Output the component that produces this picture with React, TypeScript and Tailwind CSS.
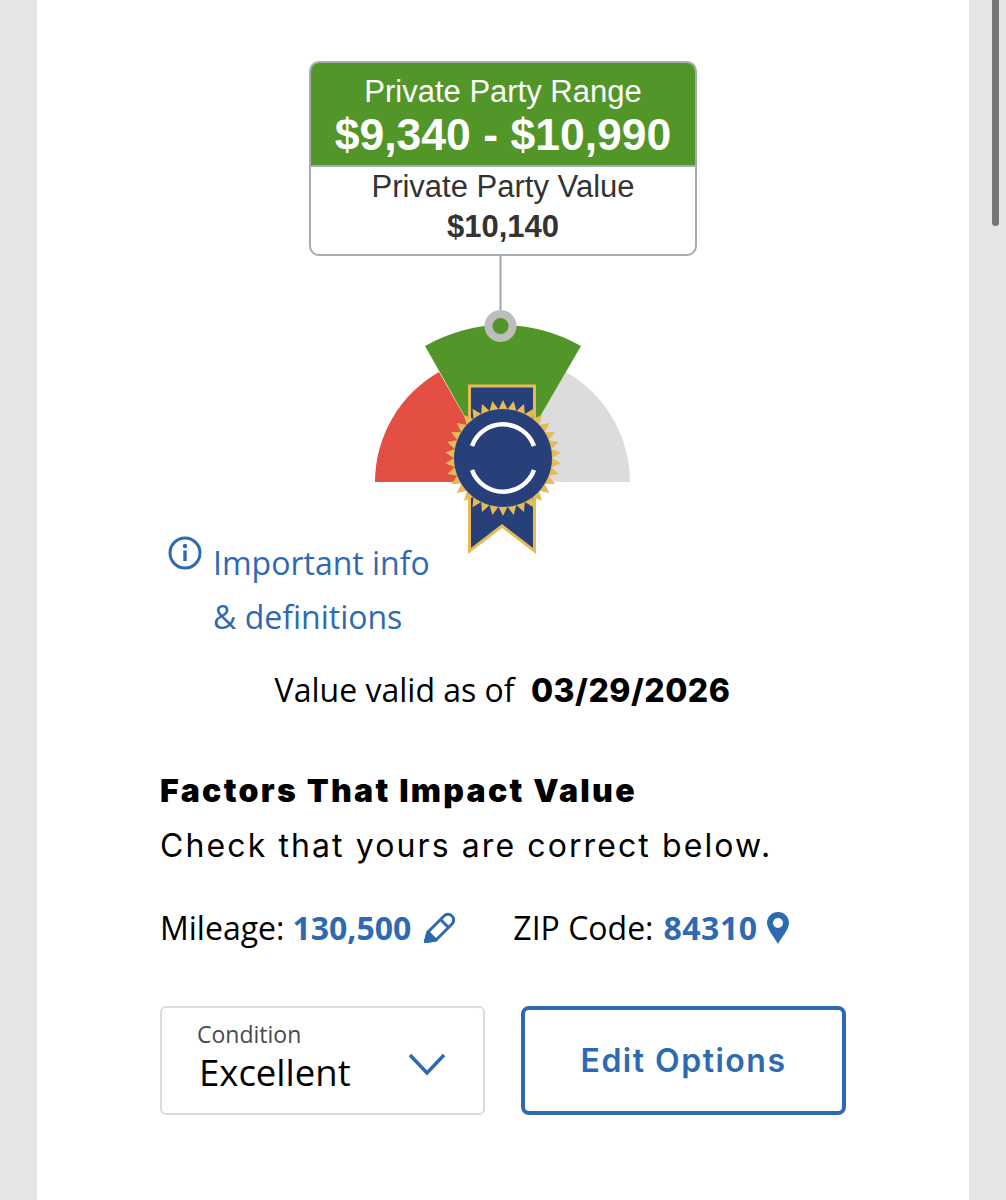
const openSans = "font-['Open_Sans',sans-serif]";
const arial = "font-['Liberation_Sans',Arial,sans-serif]";
const heading = "font-['Inter',sans-serif]";

// sawtooth ring behind the seal
function starPoints(cx: number, cy: number, outer: number, inner: number, teeth: number) {
  const pts: string[] = [];
  for (let i = 0; i < teeth * 2; i++) {
    const r = i % 2 === 0 ? outer : inner;
    const a = (Math.PI * i) / teeth - Math.PI / 2;
    pts.push(`${(cx + r * Math.cos(a)).toFixed(1)},${(cy + r * Math.sin(a)).toFixed(1)}`);
  }
  return pts.join(" ");
}

function Gauge() {
  return (
    <svg className="block w-[290px] h-[298px]" viewBox="358 256 290 298">
      <line x1="500.5" y1="256" x2="500.5" y2="312" stroke="#9ca6ae" strokeWidth="2" />
      <path d="M375 482 A127 127 0 0 1 439 372 L502 482 Z" fill="#e34f42" />
      <path d="M630 482 A127 127 0 0 0 566 372 L502 482 Z" fill="#dcdcdc" />
      <path d="M425 346 A156 156 0 0 1 581 346 L502 482 Z" fill="#52962a" />
      <circle cx="500.5" cy="326" r="12" fill="#52962a" stroke="#bdbdbd" strokeWidth="8" />
      <path d="M469.5 386 H534.5 V551 L502 526 L469.5 551 Z" fill="#28407a" stroke="#e6bb55" strokeWidth="3" />
      <polygon points={starPoints(503, 458, 58, 49, 34)} fill="#e6bb55" />
      <circle cx="503" cy="458" r="49" fill="#28407a" />
      <path d="M472 446 A33 33 0 0 1 534 446" fill="none" stroke="#fff" strokeWidth="4.5" />
      <path d="M472 470 A33 33 0 0 0 534 470" fill="none" stroke="#fff" strokeWidth="4.5" />
    </svg>
  );
}

function ValueCard() {
  return (
    <div className={`w-[388px] h-[195px] rounded-[10px] border-2 border-[#a3adb5] bg-white overflow-hidden text-center ${arial}`}>
      <div className="h-[104px] bg-[#52962a] text-white border-b-2 border-[#a3adb5] pt-[11px]">
        <div className="text-[31px] leading-[36px]">Private Party Range</div>
        <div className="text-[44.5px] leading-[50px] font-bold">$9,340 - $10,990</div>
      </div>
      <div className="text-[#333]">
        <div className="text-[31px] leading-[40px]">Private Party Value</div>
        <div className="text-[31px] leading-[40px] font-bold">$10,140</div>
      </div>
    </div>
  );
}

function InfoIcon() {
  return (
    <svg className="h-[34px] w-[34px] shrink-0" viewBox="0 0 34 34" fill="none">
      <circle cx="17" cy="17" r="15" stroke="#2e6ab1" strokeWidth="3" />
      <circle cx="17" cy="10" r="2.2" fill="#2e6ab1" />
      <path d="M17 14.5 V25" stroke="#2e6ab1" strokeWidth="3.4" />
    </svg>
  );
}

function PencilIcon() {
  return (
    <svg className="ml-[11px] h-[33px] w-[33px]" viewBox="7 8 33 33" fill="none" stroke="#2e6ab1" strokeWidth="3" strokeLinejoin="round">
      <path d="M10.5 37.5 L13 28 L29 12 A5.6 5.6 0 0 1 37 20 L21 36 Z" />
      <path d="M25.5 15.5 L33.5 23.5" />
      <path d="M10.5 37.5 L13 28 L21 36 Z" fill="#2e6ab1" />
    </svg>
  );
}

function PinIcon() {
  return (
    <svg className="ml-[9px] h-[32px] w-[22px]" viewBox="0 0 22 32">
      <path
        fillRule="evenodd"
        fill="#2e6ab1"
        d="M11 0 C4.9 0 0 4.9 0 11 C0 17 7 25 11 32 C15 25 22 17 22 11 C22 4.9 17.1 0 11 0 Z M11 6 A5 5 0 1 1 11 16 A5 5 0 1 1 11 6 Z"
      />
    </svg>
  );
}

export default function App() {
  return (
    <div className={`relative h-[1200px] overflow-hidden bg-[#e5e5e5] px-[37px] ${openSans}`}>
      <div className="h-full w-[932px] bg-white pt-[61px]">
        <div className="flex flex-col items-center">
          <ValueCard />
          <Gauge />
        </div>

        <div className="-mt-[18px] ml-[131px] flex text-[#2e6ab1] text-[32px] leading-[54px]">
          <InfoIcon />
          <a className="ml-[11px] block">
            Important info
            <br />
            &amp; definitions
          </a>
        </div>

        <div className="mt-[24px] -ml-[1px] text-center text-[32px] leading-[44px] text-black">
          Value valid as of <span className={`ml-[8px] font-extrabold tracking-[0.5px] ${heading}`}>03/29/2026</span>
        </div>

        <div className="mt-[56px] ml-[123px] w-[700px]">
          <div className={`text-[32px] leading-[44px] font-black tracking-[2.3px] text-black ${heading}`}>
            Factors That Impact Value
          </div>
          <div className={`mt-[11px] text-[32px] leading-[44px] tracking-[2.1px] text-black ${heading}`}>
            Check that yours are correct below.
          </div>

          <div className="mt-[38px] flex items-center text-[32px] leading-[44px] text-black">
            <span>Mileage:</span>
            <span className="ml-[8px] font-bold text-[#2e6ab1]">130,500</span>
            <PencilIcon />
            <span className="ml-[58px]">ZIP Code:</span>
            <span className="ml-[10px] font-bold tracking-[0.5px] text-[#2e6ab1]">84310</span>
            <PinIcon />
          </div>

          <div className="mt-[56px] flex gap-[36px]">
            <div className="relative h-[109px] w-[325px] rounded-[6px] border-2 border-[#dcdcdc] bg-white pl-[35px] pt-[11px]">
              <div className="text-[23px] leading-[30px] text-[#4a4a4a]">Condition</div>
              <div className="ml-[2px] text-[36.5px] leading-[46px] text-black">Excellent</div>
              <svg className="absolute right-[36px] top-[44px] h-[24px] w-[40px]" viewBox="0 0 40 24" fill="none">
                <path d="M3 3 L20 21 L37 3" stroke="#2e6ab1" strokeWidth="3.5" />
              </svg>
            </div>
            <button className={`h-[109px] w-[325px] rounded-[8px] border-4 border-[#2e6ab1] bg-white text-[32px] font-semibold tracking-[1.5px] text-[#2e6ab1] ${heading}`}>
              Edit Options
            </button>
          </div>
        </div>
      </div>

      {/* overlay scrollbar */}
      <div className="absolute right-[7px] top-0 h-[226px] w-[7px] rounded-b-full bg-[#757575]" />
    </div>
  );
}
